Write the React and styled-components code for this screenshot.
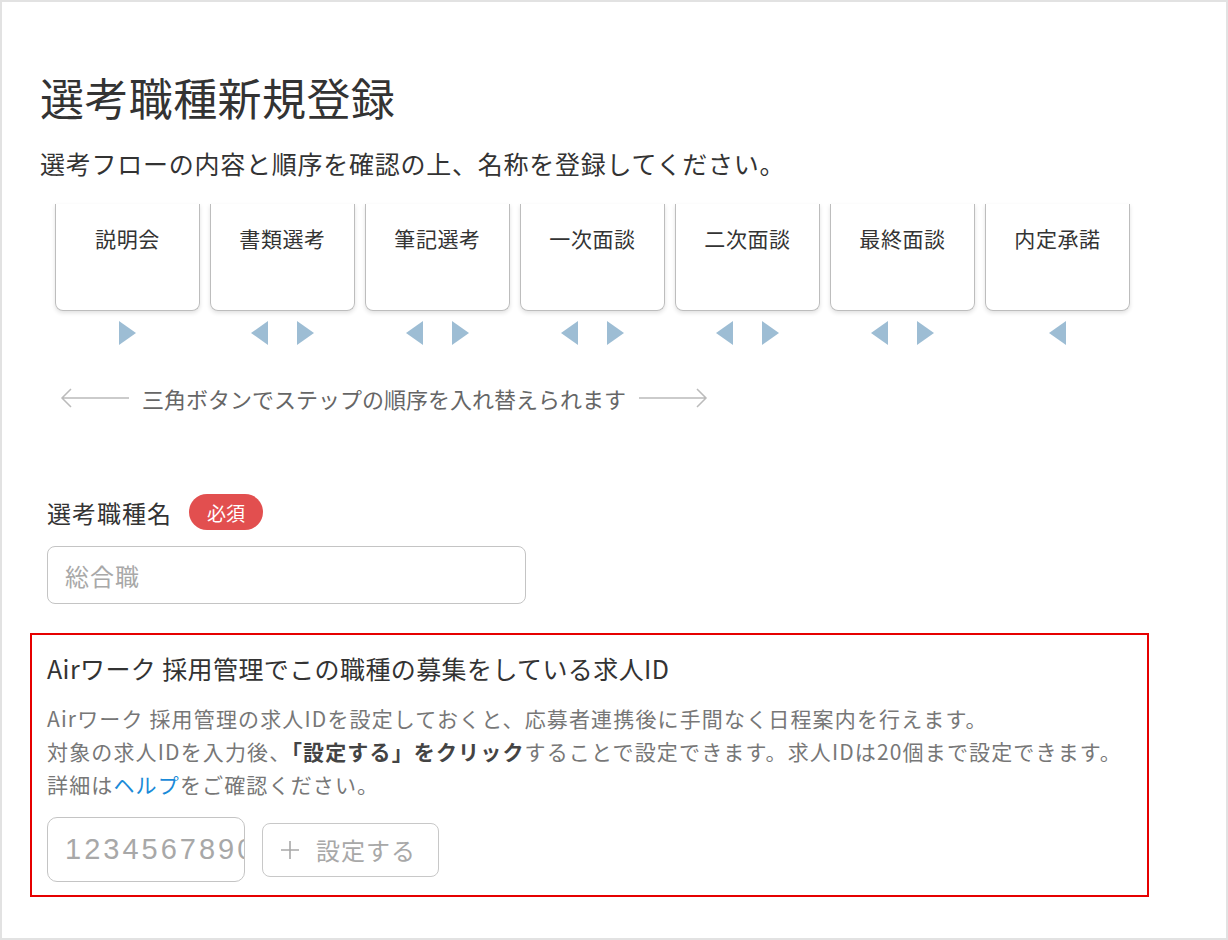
import React from "react";
import styled, { createGlobalStyle } from "styled-components";

const Global = createGlobalStyle`
  html, body { margin: 0; padding: 0; background: #fff; }
  body {
    font-family: "Noto Sans CJK JP", "Noto Sans", sans-serif;
    color: #333;
  }
  * { box-sizing: border-box; }
`;

const Frame = styled.div`
  width: 1228px;
  height: 940px;
  border: 2px solid #e2e2e2;
  padding: 69px 0 0 38px;
  overflow: hidden;
`;

const Title = styled.h1`
  margin: 0;
  font-size: 44px;
  line-height: 52px;
  font-weight: 400;
  letter-spacing: 0.4px;
  color: #333;
`;

const Lead = styled.p`
  margin: 22px 0 0;
  font-size: 25px;
  line-height: 36px;
  letter-spacing: 0.75px;
  color: #333;
`;

const Steps = styled.div`
  margin-top: 23px;
  padding-left: 15px;
  display: flex;
  gap: 10px;
`;

const StepCol = styled.div`
  width: 145px;
  display: flex;
  flex-direction: column;
`;

const Card = styled.div`
  height: 107px;
  border: 1.5px solid #bdbdbd;
  border-top: none;
  border-radius: 0 0 8px 8px;
  box-shadow: 0 2px 4px rgba(0, 0, 0, 0.12);
  padding-top: 20px;
  text-align: center;
  font-size: 21px;
  line-height: 28px;
  letter-spacing: 0.6px;
  color: #333;
`;

const Arrows = styled.div`
  margin-top: 10px;
  height: 24px;
  display: flex;
  justify-content: center;
  gap: 29px;
`;

const Tri = ({ dir }) => (
  <svg width="17" height="24" viewBox="0 0 17 24">
    <polygon
      points={dir === "left" ? "17,0 17,24 0,12" : "0,0 0,24 17,12"}
      fill="#9dbdd4"
    />
  </svg>
);

const Hint = styled.div`
  margin-top: 38px;
  padding-left: 20px;
  display: flex;
  align-items: center;
  gap: 12px;
  font-size: 22px;
  line-height: 30px;
  color: #666;
`;

const LongArrow = ({ dir }) => (
  <svg width="70" height="22" viewBox="0 0 70 22">
    {dir === "left" ? (
      <path d="M69 11H2M11 2L2 11l9 9" fill="none" stroke="#bbb" strokeWidth="1.5" />
    ) : (
      <path d="M1 11h67M59 2l9 9-9 9" fill="none" stroke="#bbb" strokeWidth="1.5" />
    )}
  </svg>
);

const Form = styled.div`
  margin-top: 81px;
  padding-left: 7px;
`;

const LabelRow = styled.div`
  display: flex;
  align-items: center;
  gap: 17px;
  height: 36px;
`;

const Label = styled.span`
  font-size: 24px;
  letter-spacing: 1px;
  color: #333;
`;

const Badge = styled.span`
  display: inline-flex;
  align-items: center;
  justify-content: center;
  width: 74px;
  height: 36px;
  border-radius: 18px;
  background: #e24f4f;
  color: #fff;
  font-size: 19px;
`;

const TextInput = styled.input`
  display: block;
  margin-top: 16px;
  width: ${(p) => p.$w}px;
  height: ${(p) => p.$h}px;
  border: 1.5px solid #c4c4c4;
  border-radius: ${(p) => p.$r}px;
  padding: ${(p) => (p.$digits ? "0 0 0 17px" : "0 16px 0 17px")};
  font-family: ${(p) =>
    p.$digits ? '"Liberation Sans", sans-serif' : '"Noto Sans CJK JP", sans-serif'};
  font-size: ${(p) => p.$fs}px;
  letter-spacing: ${(p) => p.$ls}px;
  color: #333;
  background: #fff;
  outline: none;
  &::placeholder { color: #a8a8a8; }
`;

const IdBox = styled.section`
  margin: 29px 0 0 -17px;
  width: 1119px;
  height: 264px;
  border: 2px solid #e60000;
  padding: 16px 0 0 15px;
`;

const IdTitle = styled.h2`
  margin: 0;
  font-size: 25px;
  line-height: 34px;
  font-weight: 400;
  letter-spacing: 0.4px;
  color: #333;
`;

const Desc = styled.p`
  margin: 17px 0 0;
  font-size: 21px;
  line-height: 33px;
  letter-spacing: 1.15px;
  color: #777;
  b { color: #444; font-weight: 700; }
  a { color: #1a8ad8; text-decoration: none; }
`;

const Controls = styled.div`
  margin-top: 16px;
  display: flex;
  align-items: center;
  gap: 17px;
  & > input { margin-top: 0; }
`;

const AddButton = styled.button`
  height: 54px;
  width: 177px;
  border: 1.5px solid #c8c8c8;
  border-radius: 8px;
  background: #fff;
  display: flex;
  align-items: center;
  gap: 16px;
  padding: 0 0 0 17px;
  font-family: "Noto Sans CJK JP", sans-serif;
  font-size: 24px;
  letter-spacing: 1px;
  color: #a8a8a8;
`;

const steps = ["説明会", "書類選考", "筆記選考", "一次面談", "二次面談", "最終面談", "内定承諾"];

export default function App() {
  return (
    <>
      <Global />
      <Frame>
        <Title>選考職種新規登録</Title>
        <Lead>選考フローの内容と順序を確認の上、名称を登録してください。</Lead>
        <Steps>
          {steps.map((s, i) => (
            <StepCol key={s}>
              <Card>{s}</Card>
              <Arrows>
                {i > 0 && <Tri dir="left" />}
                {i < steps.length - 1 && <Tri dir="right" />}
              </Arrows>
            </StepCol>
          ))}
        </Steps>
        <Hint>
          <LongArrow dir="left" />
          <span>三角ボタンでステップの順序を入れ替えられます</span>
          <LongArrow dir="right" />
        </Hint>
        <Form>
          <LabelRow>
            <Label>選考職種名</Label>
            <Badge>必須</Badge>
          </LabelRow>
          <TextInput $w={479} $h={58} $r={8} $fs={24} $ls={1} placeholder="総合職" />
          <IdBox>
            <IdTitle>Airワーク 採用管理でこの職種の募集をしている求人ID</IdTitle>
            <Desc>
              Airワーク 採用管理の求人IDを設定しておくと、応募者連携後に手間なく日程案内を行えます。
              <br />
              対象の求人IDを入力後、<b>「設定する」をクリック</b>することで設定できます。求人IDは20個まで設定できます。
              <br />
              詳細は<a href="#help">ヘルプ</a>をご確認ください。
            </Desc>
            <Controls>
              <TextInput $digits $w={198} $h={65} $r={10} $fs={29} $ls={3} placeholder="1234567890" />
              <AddButton type="button">
                <svg width="20" height="20" viewBox="0 0 20 20">
                  <path d="M10 1v18M1 10h18" stroke="#a8a8a8" strokeWidth="1.6" />
                </svg>
                設定する
              </AddButton>
            </Controls>
          </IdBox>
        </Form>
      </Frame>
    </>
  );
}
